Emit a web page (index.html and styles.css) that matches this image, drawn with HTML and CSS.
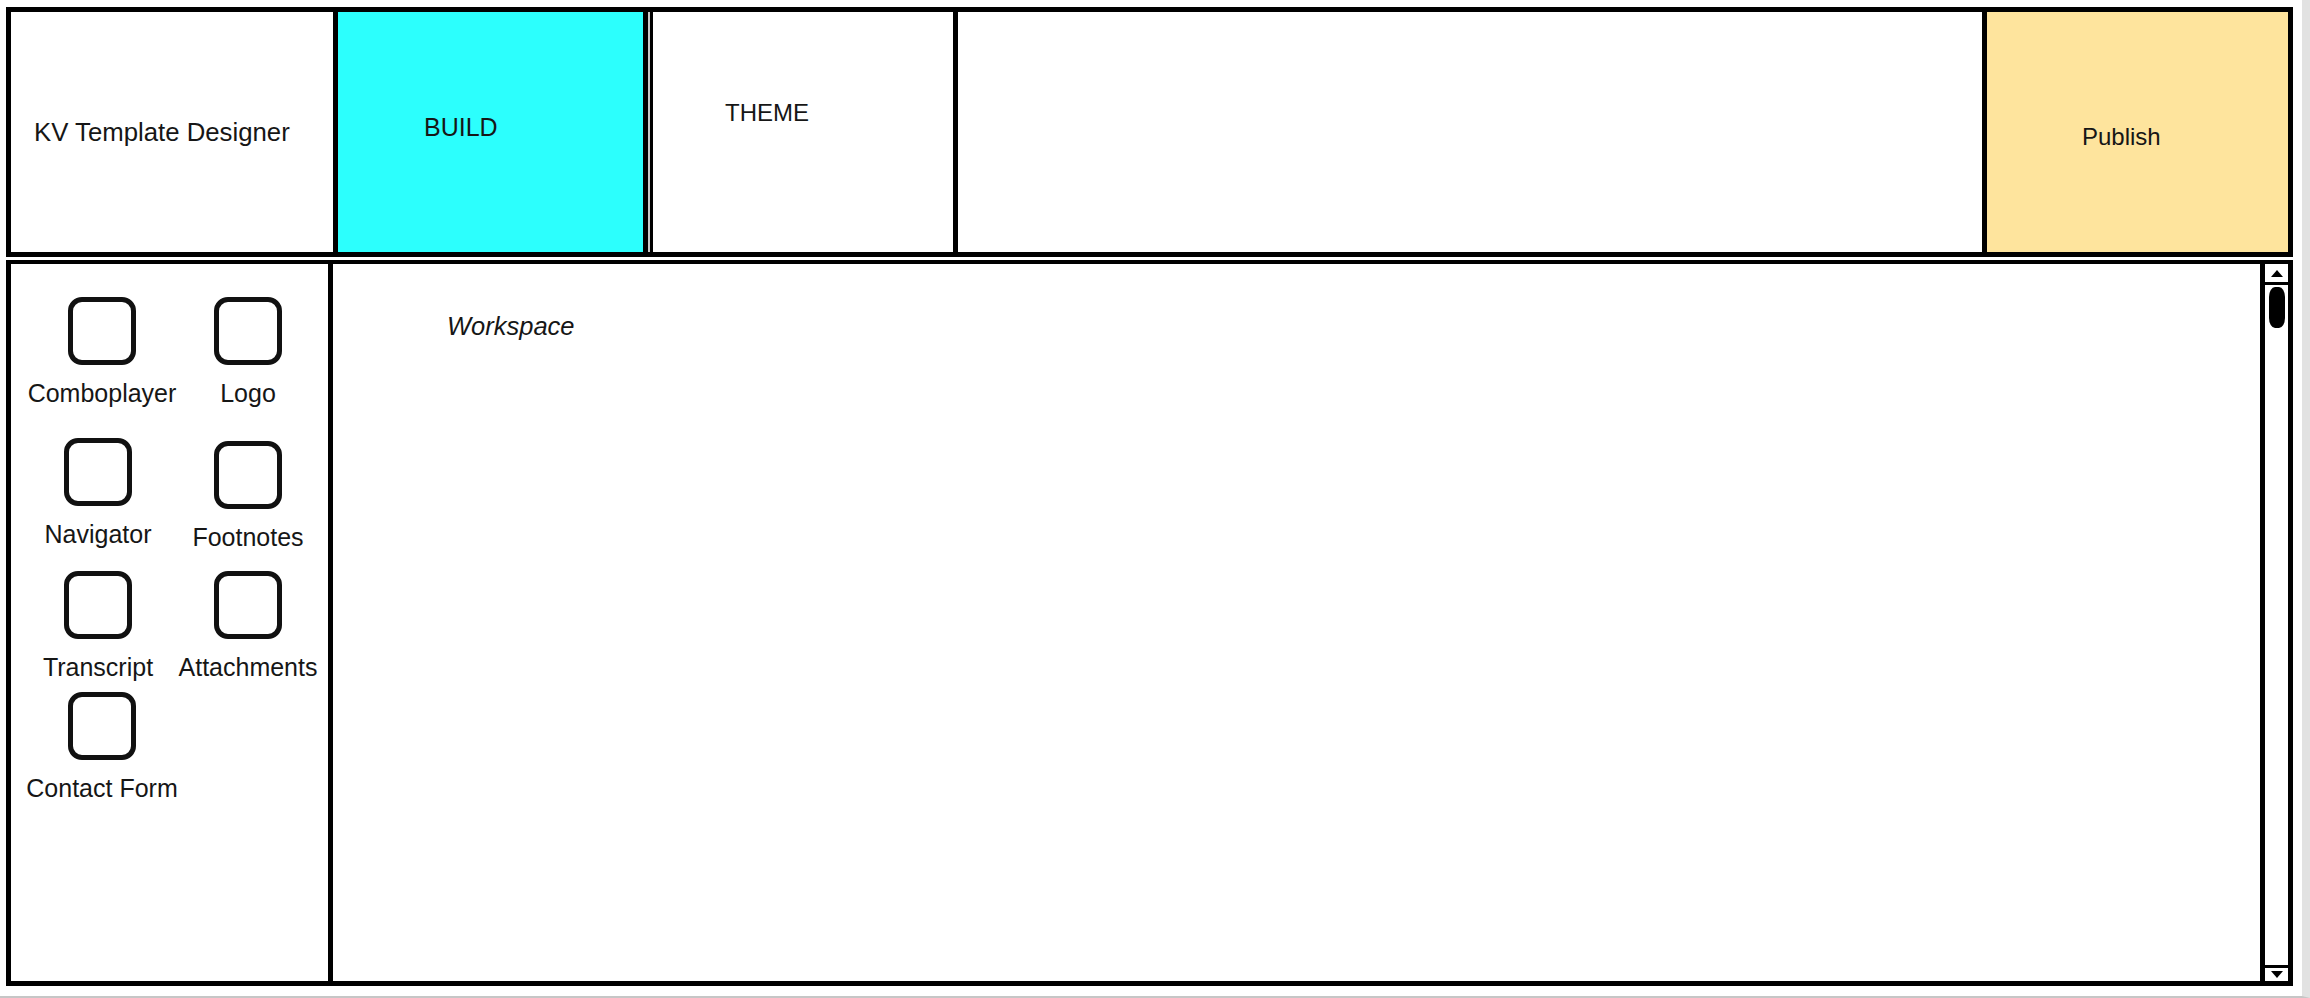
FILE: index.html
```html
<!DOCTYPE html>
<html lang="en">

<head>
    <meta charset="UTF-8">
    <meta name="viewport" content="width=device-width, initial-scale=1.0">
    <title>KV Template Designer</title>
    <link rel="stylesheet" href="styles.css">
</head>

<body>
    <div class="frame">
        <header class="topbar">
            <div class="brand">KV Template Designer</div>
            <div class="tab tab-build">BUILD</div>
            <div class="tab tab-theme">THEME</div>
            <div class="spacer"></div>
            <div class="publish">Publish</div>
        </header>

        <main class="editor">
            <aside class="widgets">
                <div class="widget"><div class="widget-icon"></div><span>Comboplayer</span></div>
                <div class="widget"><div class="widget-icon"></div><span>Logo</span></div>
                <div class="widget shift-left"><div class="widget-icon"></div><span>Navigator</span></div>
                <div class="widget drop"><div class="widget-icon"></div><span>Footnotes</span></div>
                <div class="widget shift-left"><div class="widget-icon"></div><span>Transcript</span></div>
                <div class="widget"><div class="widget-icon"></div><span>Attachments</span></div>
                <div class="widget"><div class="widget-icon"></div><span>Contact Form</span></div>
            </aside>

            <section class="workspace">
                <div class="canvas">
                    <em class="canvas-label">Workspace</em>
                </div>
                <div class="scrollbar">
                    <div class="scroll-btn scroll-up"><span class="arrow-up"></span></div>
                    <div class="scroll-track">
                        <div class="scroll-thumb"></div>
                    </div>
                    <div class="scroll-btn scroll-down"><span class="arrow-down"></span></div>
                </div>
            </section>
        </main>
    </div>
</body>

</html>
```

FILE: styles.css
```css
/* Reset */
body {
    margin: 0;
    height: 996px;
    background-color: #fff;
    border-right: 8px solid #e2e2e2;
    border-bottom: 2px solid #c6c6c6;
    font-family: "Liberation Sans", Arial, sans-serif;
    font-size: 25px;
    color: #161616;
}

.frame {
    width: 2287px;
    padding: 7px 0 0 6px;
}

/* Top bar */
.topbar {
    display: flex;
    height: 250px;
    box-sizing: border-box;
    border: 5px solid #000;
    background-color: #c8c8c8;
}

.brand,
.tab,
.publish {
    display: flex;
    align-items: center;
    box-sizing: border-box;
    white-space: nowrap;
}

.brand {
    width: 327px;
    padding-left: 23px;
    font-size: 25.75px;
    background-color: #fff;
    border-right: 5px solid #000;
}

.tab-build {
    width: 310px;
    padding: 0 0 10px 86px;
    background-color: #2cfffd;
    border-right: 5px solid #000;
}

.tab-theme {
    width: 308px;
    margin-left: 2px;
    padding: 0 0 38px 72px;
    font-size: 24px;
    background-color: #fff;
    border-left: 3px solid #000;
    border-right: 5px solid #000;
}

.spacer {
    flex: 1;
    background-color: #fff;
}

.publish {
    width: 306px;
    padding: 10px 0 0 95px;
    font-size: 24px;
    background-color: #fee49d;
    border-left: 5px solid #000;
}

/* Editor area */
.editor {
    display: flex;
    height: 726px;
    margin-top: 3px;
    box-sizing: border-box;
    border: 5px solid #000;
    border-top-width: 4px;
}

.widgets {
    width: 322px;
    box-sizing: border-box;
    padding: 33px 0 0 18px;
    border-right: 5px solid #000;
    display: grid;
    grid-template-columns: 146px 146px;
    grid-template-rows: 141px 133px 121px auto;
    align-content: start;
}

.widget {
    display: flex;
    flex-direction: column;
    align-items: center;
}

.shift-left {
    margin-right: 8px;
}

.drop {
    margin-top: 3px;
}

.widget-icon {
    width: 68px;
    height: 68px;
    box-sizing: border-box;
    border: 5px solid #111;
    border-radius: 14px;
}

.widget span {
    margin-top: 14px;
    line-height: 28px;
    white-space: nowrap;
}

.workspace {
    flex: 1;
    display: flex;
}

.canvas {
    flex: 1;
    padding: 48px 0 0 114px;
}

.canvas-label {
    line-height: 28px;
    font-size: 25.5px;
}

/* Scrollbar */
.scrollbar {
    width: 28px;
    box-sizing: border-box;
    border-left: 5px solid #000;
    display: flex;
    flex-direction: column;
}

.scroll-btn {
    display: flex;
    align-items: center;
    justify-content: center;
}

.scroll-up {
    height: 18px;
    border-bottom: 3px solid #000;
}

.scroll-down {
    height: 13px;
    border-top: 3px solid #000;
}

.arrow-up,
.arrow-down {
    width: 0;
    height: 0;
    border-left: 6px solid transparent;
    border-right: 6px solid transparent;
}

.arrow-up {
    border-bottom: 7px solid #000;
}

.arrow-down {
    border-top: 7px solid #000;
}

.scroll-track {
    flex: 1;
}

.scroll-thumb {
    width: 16px;
    height: 41px;
    margin: 2px auto 0;
    background-color: #000;
    border-radius: 6px / 10px;
}
```
